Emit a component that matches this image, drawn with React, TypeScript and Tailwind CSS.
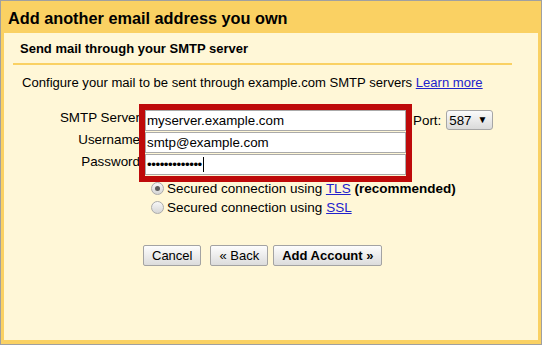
function Radio({ checked }: { checked?: boolean }) {
  return (
    <span className="flex h-[13px] w-[13px] shrink-0 items-center justify-center rounded-full border border-[#ababab] bg-linear-to-b from-[#f7f7f7] to-[#d6d6d6]">
      {checked && <span className="h-[5px] w-[5px] rounded-full bg-[#5c5c5c]" />}
    </span>
  );
}

function Button({ children, bold }: { children: React.ReactNode; bold?: boolean }) {
  return (
    <button
      className={`h-[21px] rounded-[2px] border border-[#a3a3a3] bg-linear-to-b from-[#fdfdfd] to-[#dcdcdc] px-[8px] text-[13px] leading-[19px] text-black ${
        bold ? 'font-bold' : ''
      }`}
    >
      {children}
    </button>
  );
}

export default function App() {
  const field =
    'h-[21px] w-[261px] border border-[#aaaaaa] bg-white px-[1px] text-[13.33px] leading-[19px] text-black outline-none';

  return (
    <div className="relative flex h-[345px] w-[542px] flex-col border border-[#a0a0a0] bg-[#fad163] font-['Liberation_Sans',Arial,sans-serif] text-black">
      <div className="h-[32px] pl-[7px] pt-[8px] text-[16.3px] font-bold leading-[19px]">
        Add another email address you own
      </div>

      <div className="mx-[3px] h-[307px] bg-[#fff7d7] text-[13px] leading-[15px]">
        <div className="pl-[16px] pt-[8px] font-bold">Send mail through your SMTP server</div>
        <div className="ml-[9px] mr-[26px] mt-[7px] h-[2px] bg-[#fad163]" />

        <p className="mt-[10px] pl-[18px] text-[13.08px]">
          Configure your mail to be sent through example.com SMTP servers{' '}
          <a href="#" className="text-[#2222cc] underline">
            Learn more
          </a>
        </p>

        {/* form */}
        <div className="mt-[20px] flex flex-col gap-[1px] text-[13.4px]">
          <div className="flex items-start">
            <label className="w-[136px] text-right">SMTP Server</label>
            <input readOnly value="myserver.example.com" className={`ml-[5px] ${field}`} />
            <span className="ml-[7px] mt-[3px]">Port:</span>
            <div className="ml-[5px] flex h-[20px] w-[47px] items-center justify-between rounded-[3px] border border-[#a6a6a6] bg-linear-to-b from-[#fbfbfb] to-[#dadada] pl-[2px] pr-[5px] text-[13.33px]">
              <span>587</span>
              <span className="text-[10px] leading-none">▼</span>
            </div>
          </div>
          <div className="flex items-start">
            <label className="w-[136px] text-right">Username</label>
            <input readOnly value="smtp@example.com" className={`ml-[5px] ${field}`} />
          </div>
          <div className="flex items-start">
            <label className="w-[136px] text-right">Password</label>
            <div className={`ml-[5px] flex items-center ${field}`}>
              <span className="tracking-[-0.45px]">•••••••••••••</span>
              <span className="ml-[1px] h-[15px] w-[1px] bg-black" />
            </div>
          </div>
        </div>

        <div className="ml-[147px] mt-[6px] flex flex-col gap-[4px] text-[13.5px]">
          <div className="flex items-center gap-[3px]">
            <Radio checked />
            <span>
              Secured connection using{' '}
              <a href="#" className="text-[#2222cc] underline">
                TLS
              </a>{' '}
              <b>(recommended)</b>
            </span>
          </div>
          <div className="flex items-center gap-[3px]">
            <Radio />
            <span>
              Secured connection using{' '}
              <a href="#" className="text-[#2222cc] underline">
                SSL
              </a>
            </span>
          </div>
        </div>

        <div className="ml-[139px] mt-[30px] flex">
          <Button>Cancel</Button>
          <div className="ml-[9px]">
            <Button>« Back</Button>
          </div>
          <div className="ml-[5px]">
            <Button bold>Add Account »</Button>
          </div>
        </div>
      </div>

      {/* red highlight annotation */}
      <div className="pointer-events-none absolute left-[138px] top-[103px] h-[78px] w-[273px] border-[6px] border-[#be0a0a]" />
    </div>
  );
}
